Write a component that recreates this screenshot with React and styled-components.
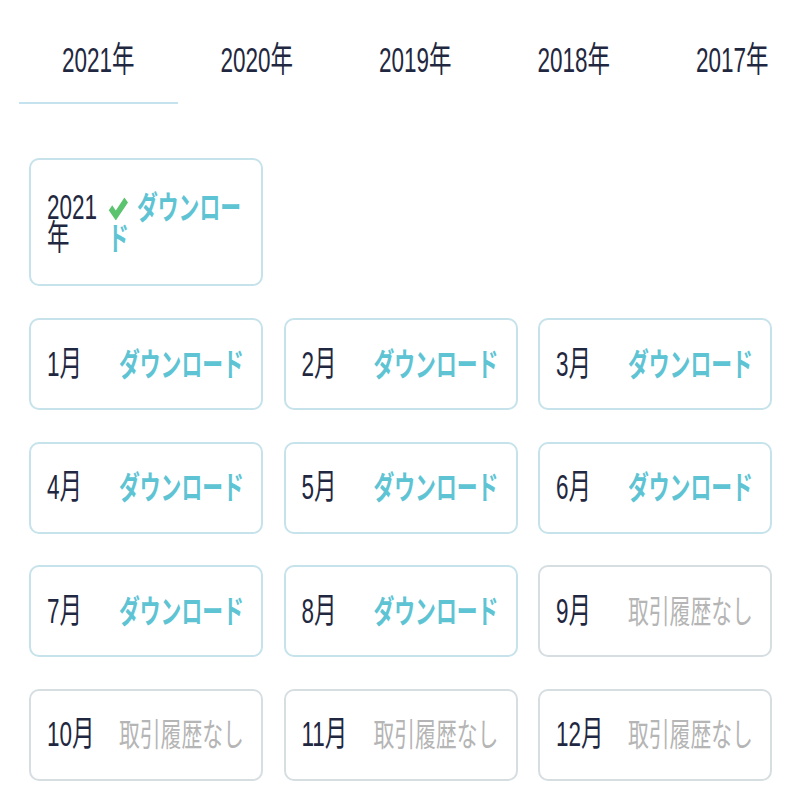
import React, { useState } from 'react'
import styled, { createGlobalStyle } from 'styled-components'

const GlobalStyle = createGlobalStyle`
  body {
    margin: 0;
    background: #ffffff;
    font-family: "Liberation Sans", "Noto Sans CJK JP", sans-serif;
    color: #1f2840;
  }
`

const Page = styled.div`
  width: 803px;
  overflow: hidden;
`

const Tabs = styled.div`
  display: flex;
  padding-left: 19px;
  height: 104px;
`

const Tab = styled.div`
  flex: none;
  width: 158.5px;
  height: 104px;
  box-sizing: border-box;
  padding-top: 21px;
  display: flex;
  align-items: center;
  justify-content: center;
  border-bottom: 2px solid ${(props) => (props.active ? '#c5e3ee' : 'transparent')};
  cursor: pointer;
`

const Tall = styled.div`
  transform: scaleY(1.55);
  transform-origin: center;
`

const TabText = styled(Tall)`
  font-size: 22.5px;
  line-height: 1;
  color: #1f2840;
`

const Main = styled.div`
  padding: 54px 31px 0 29px;
`

const Card = styled.div`
  box-sizing: border-box;
  width: 234px;
  height: ${(props) => props.h || 92}px;
  border: 2px solid ${(props) => (props.empty ? '#d6dee1' : '#c6e2eb')};
  border-radius: 10px;
  display: flex;
  align-items: center;
  padding: 0 11px 0 16px;
`

const Content = styled(Tall)`
  display: flex;
  align-items: baseline;
  line-height: 19.5px;
`

const Label = styled.div`
  flex: none;
  width: ${(props) => props.w}px;
  margin-right: ${(props) => props.gap || 0}px;
  font-size: 22.5px;
  color: #1f2840;
`

const Status = styled.div`
  flex: 1;
  font-family: "Noto Sans CJK JP", sans-serif;
  font-size: 20.8px;
  font-weight: ${(props) => (props.empty ? 400 : 700)};
  color: ${(props) => (props.empty ? '#b5b5b5' : '#5ec4d4')};
  white-space: ${(props) => (props.wrap ? 'normal' : 'nowrap')};
  word-break: break-all;
  padding-right: ${(props) => (props.wrap ? 5 : 0)}px;
`

const Check = styled.svg`
  width: 21px;
  height: 15px;
  margin-right: 8px;
  vertical-align: -1px;
`

const Grid = styled.div`
  margin-top: 32px;
  display: grid;
  grid-template-columns: repeat(3, 234px);
  column-gap: 20.5px;
  row-gap: 31.5px;
`

const years = ['2021年', '2020年', '2019年', '2018年', '2017年']
const months = [1, 2, 3, 4, 5, 6, 7, 8, 9, 10, 11, 12]
const lastMonth = 8

const CheckIcon = () => (
  <Check viewBox="0 0 21 15">
    <path
      d="M0.8 8.4 L4.2 5.2 L7.8 8.6 L16.4 0.2 L20 3.4 L7.8 15 Z"
      fill="#5cc46e"
    />
  </Check>
)

const App = () => {
  const [year, setYear] = useState(0)

  return (
    <Page>
      <GlobalStyle />
      <Tabs>
        {years.map((y, i) => (
          <Tab key={y} active={i === year} onClick={() => setYear(i)}>
            <TabText>{y}</TabText>
          </Tab>
        ))}
      </Tabs>
      <Main>
        <Card h={128}>
          <Content>
            <Label w={52} gap={9}>2021年</Label>
            <Status wrap>
              <CheckIcon />
              ダウンロード
            </Status>
          </Content>
        </Card>
        <Grid>
          {months.map((m) => {
            const empty = m > lastMonth
            return (
              <Card key={m} empty={empty}>
                <Content>
                  <Label w={72}>{m}月</Label>
                  <Status empty={empty}>
                    {empty ? '取引履歴なし' : 'ダウンロード'}
                  </Status>
                </Content>
              </Card>
            )
          })}
        </Grid>
      </Main>
    </Page>
  )
}

export default App
